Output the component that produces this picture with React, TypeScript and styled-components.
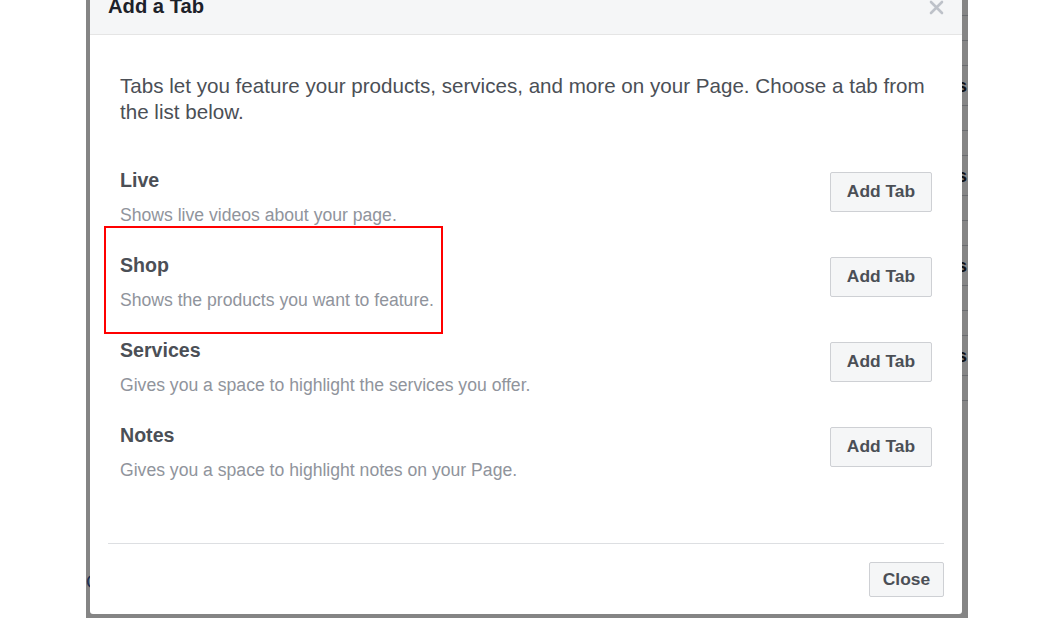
import React from "react";
import styled, { createGlobalStyle } from "styled-components";

const GlobalStyle = createGlobalStyle`
  html, body {
    margin: 0;
    padding: 0;
    background: #ffffff;
  }
  body {
    font-family: "Liberation Sans", Arial, Helvetica, sans-serif;
    -webkit-font-smoothing: antialiased;
  }
`;

const Page = styled.div`
  width: 1054px;
  height: 618px;
  overflow: hidden;
  display: flex;
  padding-left: 86px;
  box-sizing: border-box;
  background: #ffffff;
`;

const Stage = styled.div`
  position: relative;
  width: 882px;
  height: 618px;
  overflow: hidden;
`;

// page that sits behind the dimmed overlay
const Underlay = styled.div`
  height: 100%;
  display: flex;
  flex-direction: column;
  padding-top: 15px;
  box-sizing: border-box;
  background: #ffffff;
`;

const UnderRow = styled.div<{ $tall?: boolean }>`
  height: ${(p) => (p.$tall ? 40 : 25)}px;
  margin-left: 420px;
  border-top: 1px solid #ccd0d5;
  box-sizing: border-box;
  display: flex;
  align-items: center;
  justify-content: flex-end;
  padding-right: 1px;
  font-size: 19px;
  font-weight: 700;
  color: #1d2129;
`;

const UnderLink = styled.div`
  margin-top: auto;
  margin-bottom: 25px;
  line-height: 22px;
  font-size: 18px;
  color: #365899;
`;

const Overlay = styled.div`
  position: absolute;
  inset: 0;
  background: rgba(0, 0, 0, 0.48);
  display: flex;
  flex-direction: column;
  padding: 0 6px 4px 4px;
  box-sizing: border-box;
`;

const Dialog = styled.div`
  flex: 1;
  margin-top: -14px;
  background: #ffffff;
  border-radius: 3px;
  overflow: hidden;
  display: flex;
  flex-direction: column;
`;

const Header = styled.div`
  height: 49px;
  box-sizing: border-box;
  padding: 8px 18px 0;
  background: #f5f6f7;
  border-bottom: 1px solid #e5e5e5;
  display: flex;
  justify-content: space-between;
  align-items: flex-start;
`;

const Title = styled.h2`
  margin: 0;
  font-size: 20.2px;
  line-height: 24px;
  font-weight: 700;
  color: #1d2129;
`;

const CloseX = styled.button`
  margin-top: 6px;
  padding: 0;
  border: 0;
  background: none;
  width: 15px;
  height: 15px;
  display: flex;
  cursor: pointer;
`;

const Body = styled.div`
  flex: 1;
  padding: 38px 30px 0;
`;

const Intro = styled.p`
  margin: 0 0 43px;
  font-size: 20.6px;
  line-height: 26px;
  color: #4b4f56;
`;

const TabList = styled.div`
  display: flex;
  flex-direction: column;
  gap: 27.5px;
`;

const TabRow = styled.div`
  position: relative;
  display: flex;
  justify-content: space-between;
  align-items: flex-start;
`;

const TabInfo = styled.div`
  display: flex;
  flex-direction: column;
  gap: 11.5px;
`;

const TabName = styled.div`
  font-size: 19.6px;
  line-height: 24px;
  font-weight: 700;
  color: #4b4f56;
`;

const TabDesc = styled.div`
  font-size: 17.6px;
  line-height: 22px;
  color: #90949c;
`;

const Highlight = styled.div`
  position: absolute;
  left: -16px;
  top: -27.5px;
  width: 339px;
  height: 108px;
  box-sizing: border-box;
  border: 2px solid #f00;
  pointer-events: none;
`;

const Button = styled.button<{ $w: number; $h: number }>`
  width: ${(p) => p.$w}px;
  height: ${(p) => p.$h}px;
  box-sizing: border-box;
  border: 1px solid #ced0d4;
  border-radius: 2px;
  background: #f5f6f7;
  color: #4b4f56;
  font-family: inherit;
  font-size: 17.4px;
  font-weight: 700;
  padding: 0;
  cursor: pointer;
`;

const AddButton = styled(Button)`
  margin-top: 3.5px;
  flex-shrink: 0;
`;

const Footer = styled.div`
  margin: 0 18px;
  border-top: 1px solid #dddfe2;
  padding: 18px 0 17px;
  display: flex;
  justify-content: flex-end;
`;

const tabs = [
  { name: "Live", desc: "Shows live videos about your page." },
  { name: "Shop", desc: "Shows the products you want to feature.", marked: true },
  { name: "Services", desc: "Gives you a space to highlight the services you offer." },
  { name: "Notes", desc: "Gives you a space to highlight notes on your Page." },
];

const underGroups = ["Reviews", "Videos", "Photos", "Groups"];

export default function App() {
  return (
    <>
      <GlobalStyle />
      <Page>
        <Stage>
          <Underlay>
            {underGroups.map((label) => (
              <React.Fragment key={label}>
                <UnderRow />
                <UnderRow />
                <UnderRow $tall>{label}</UnderRow>
              </React.Fragment>
            ))}
            <UnderRow />
            <UnderRow />
            <UnderLink>Create Tab</UnderLink>
          </Underlay>

          <Overlay>
            <Dialog>
              <Header>
                <Title>Add a Tab</Title>
                <CloseX aria-label="Close">
                  <svg width="15" height="15" viewBox="0 0 15 15">
                    <path
                      d="M2 2 L13 13 M13 2 L2 13"
                      stroke="#bec2c9"
                      strokeWidth="2.6"
                      strokeLinecap="round"
                    />
                  </svg>
                </CloseX>
              </Header>

              <Body>
                <Intro>
                  Tabs let you feature your products, services, and more on your
                  Page. Choose a tab from the list below.
                </Intro>
                <TabList>
                  {tabs.map((t) => (
                    <TabRow key={t.name}>
                      {t.marked && <Highlight />}
                      <TabInfo>
                        <TabName>{t.name}</TabName>
                        <TabDesc>{t.desc}</TabDesc>
                      </TabInfo>
                      <AddButton $w={102} $h={40}>
                        Add Tab
                      </AddButton>
                    </TabRow>
                  ))}
                </TabList>
              </Body>

              <Footer>
                <Button $w={75} $h={35}>
                  Close
                </Button>
              </Footer>
            </Dialog>
          </Overlay>
        </Stage>
      </Page>
    </>
  );
}
